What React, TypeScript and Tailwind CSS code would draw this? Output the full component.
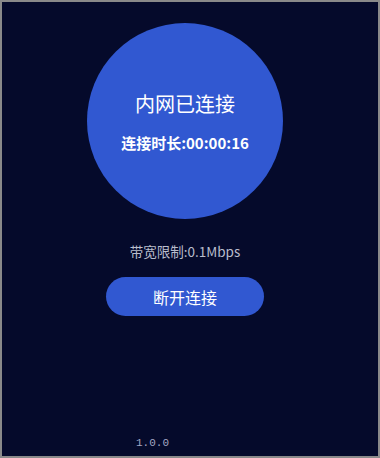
import React from 'react'

const cjk = { fontFamily: '"Noto Sans CJK SC", "Liberation Sans", sans-serif' }

export default function App() {
  const seconds = 16
  const pad = (n: number) => String(n).padStart(2, '0')
  const duration = `${pad(Math.floor(seconds / 3600))}:${pad(Math.floor(seconds / 60) % 60)}:${pad(seconds % 60)}`

  return (
    <div
      className="w-[380px] h-[458px] border-2 border-[#8a8a8a] bg-[#050a2b] flex flex-col items-center pr-[10px] pt-[21px]"
      style={cjk}
    >
      {/* 状态圆 */}
      <div className="w-[196px] h-[196px] shrink-0 rounded-full bg-[#3158d1] flex flex-col items-center pt-[67px]">
        <div className="text-[20px] leading-[28px] text-white">内网已连接</div>
        <div className="mt-[15px] text-[15px] leading-[20px] font-bold text-white">
          连接时长:{duration}
        </div>
      </div>

      {/* 带宽 */}
      <div className="mt-[22px] text-[13.5px] leading-[20px] text-[#b9bdcc]">带宽限制:0.1Mbps</div>

      {/* 断开按钮 */}
      <button className="mt-[16px] w-[158px] h-[39px] rounded-full bg-[#3158d1] text-white text-[16px] leading-none">
        断开连接
      </button>

      {/* 版本号 */}
      <div
        className="mt-auto mb-[6px] self-start ml-[134px] text-[11px] leading-[14px] text-[#a3a7c4]"
        style={{ fontFamily: '"Liberation Mono", monospace' }}
      >
        1.0.0
      </div>
    </div>
  )
}
